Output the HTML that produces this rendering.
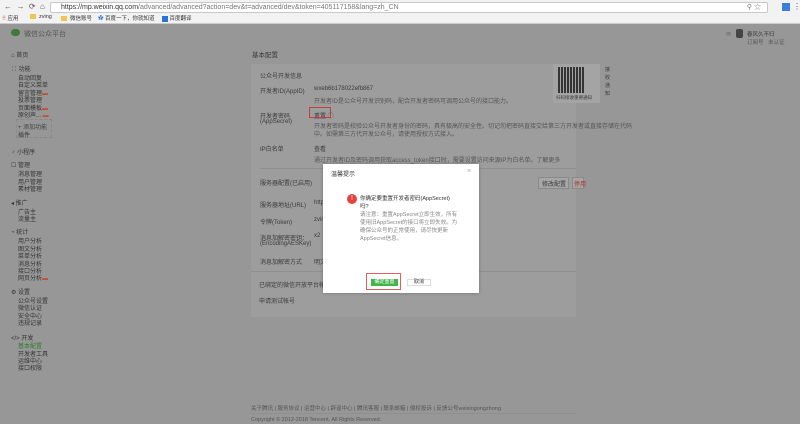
<!DOCTYPE html>
<html><head><meta charset="utf-8"><style>
*{margin:0;padding:0;box-sizing:border-box}
body{width:800px;height:424px;overflow:hidden;position:relative;background:#979797;font-family:"Liberation Sans","Noto Sans CJK SC",sans-serif;font-size:6px;color:#3a3a3a}
.a{position:absolute;white-space:nowrap}
.chrome{position:absolute;left:0;top:0;width:800px;height:24px;background:#f2f2f2;border-bottom:1px solid #ccc}
.url{position:absolute;left:50px;top:2px;width:718px;height:11px;background:#fff;border:1px solid #c8c8c8;border-radius:2px;font-size:7px;color:#777;padding-left:10px;line-height:9px}
.bm{position:absolute;top:14px;font-size:5.5px;color:#333}
.fold{display:inline-block;width:6px;height:5px;background:#f1c550;margin-right:3px;vertical-align:middle}
.sb{color:#333;font-size:6px}
.panel{position:absolute;left:251px;top:64px;width:325px;height:253px;background:#9d9d9d}
.dlg{position:absolute;left:323px;top:164px;width:156px;height:129px;background:#fff;box-shadow:0 0 3px rgba(0,0,0,.3)}
.g{color:#555}
</style></head><body>
<div class="chrome">
<div class="a" style="left:4px;top:2px;font-size:8px;color:#555">←&nbsp; → &nbsp;⟳ &nbsp;⌂</div>
<div class="url"><span style="color:#333">https://mp.weixin.qq.com</span>/advanced/advanced?action=dev&amp;t=advanced/dev&amp;token=405117158&amp;lang=zh_CN<span style="position:absolute;right:6px;top:0">⚲ ☆</span></div>
<div class="a" style="left:782px;top:3px;width:8px;height:8px;background:#3b7ed8"></div>
<div class="a" style="left:793px;top:2px;font-size:8px;color:#555">⋮</div>
<div class="bm" style="left:2px"><span style="color:#d44">⠿</span> 应用</div>
<div class="bm" style="left:30px"><span class="fold"></span>zving</div>
<div class="bm" style="left:61px"><span class="fold"></span>微信账号</div>
<div class="bm" style="left:98px"><span style="color:#3a7bd5">✿</span> 百度一下，你就知道</div>
<div class="bm" style="left:162px"><span style="display:inline-block;width:6px;height:6px;background:#2a74d6;vertical-align:middle"></span> 百度翻译</div>
</div>
<div class="a" style="left:11px;top:29px;width:9px;height:7px;background:#3f7a3a;border-radius:4px"></div>
<div class="a" style="left:24px;top:29px;font-size:7px;color:#555">微信公众平台</div>
<div class="a" style="left:736px;top:29px;width:7px;height:9px;background:#444;border-radius:2px"></div>
<div class="a" style="left:747px;top:30px;font-size:5.5px">春风久不归</div>
<div class="a" style="left:747px;top:38px;font-size:5.5px;color:#555">订阅号 &nbsp; 未认证</div>
<div class="a" style="left:726px;top:31px;font-size:6px;color:#666">✉</div>

<div class="sb">
<div class="a" style="left:11px;top:50px">⌂ 首页</div>
<div class="a" style="left:11px;top:64px">∷ 功能</div>
<div class="a" style="left:18px;top:73px">自动回复</div>
<div class="a" style="left:18px;top:80px">自定义菜单</div>
<div class="a" style="left:18px;top:88px">留言管理<span style="color:#c5502f">▬</span></div>
<div class="a" style="left:18px;top:95px">投票管理</div>
<div class="a" style="left:18px;top:103px">页面模板<span style="color:#c5502f">▬</span></div>
<div class="a" style="left:18px;top:110px">原创声... <span style="color:#c5502f">▬</span></div>
<div class="a" style="left:16px;top:119px;width:36px;height:19px;border:1px dashed #888"></div>
<div class="a" style="left:18px;top:122px;color:#444">+ 添加功能</div>
<div class="a" style="left:18px;top:130px">插件</div>
<div class="a" style="left:11px;top:147px">♂ 小程序</div>
<div class="a" style="left:11px;top:160px">☐ 管理</div>
<div class="a" style="left:18px;top:169px">消息管理</div>
<div class="a" style="left:18px;top:177px">用户管理</div>
<div class="a" style="left:18px;top:184px">素材管理</div>
<div class="a" style="left:11px;top:198px">◂ 推广</div>
<div class="a" style="left:18px;top:207px">广告主</div>
<div class="a" style="left:18px;top:214px">流量主</div>
<div class="a" style="left:11px;top:227px">◔ 统计</div>
<div class="a" style="left:18px;top:236px">用户分析</div>
<div class="a" style="left:18px;top:244px">图文分析</div>
<div class="a" style="left:18px;top:251px">菜单分析</div>
<div class="a" style="left:18px;top:259px">消息分析</div>
<div class="a" style="left:18px;top:266px">接口分析</div>
<div class="a" style="left:18px;top:273px">网页分析<span style="color:#c5502f">▬</span></div>
<div class="a" style="left:11px;top:287px">⚙ 设置</div>
<div class="a" style="left:18px;top:296px">公众号设置</div>
<div class="a" style="left:18px;top:303px">微信认证</div>
<div class="a" style="left:18px;top:311px">安全中心</div>
<div class="a" style="left:18px;top:318px">违规记录</div>
<div class="a" style="left:11px;top:333px">&lt;/&gt; 开发</div>
<div class="a" style="left:18px;top:341px;color:#2e7d2e">基本配置</div>
<div class="a" style="left:18px;top:349px">开发者工具</div>
<div class="a" style="left:18px;top:356px">运维中心</div>
<div class="a" style="left:18px;top:363px">接口权限</div>
</div>

<div class="a" style="left:252px;top:49px;font-size:6.5px">基本配置</div>
<div class="panel"></div>
<div class="a" style="left:260px;top:71px">公众号开发信息</div>
<div class="a" style="left:260px;top:86px">开发者ID(AppID)</div>
<div class="a" style="left:314px;top:86px">wxeb6b178022efb867</div>
<div class="a g" style="left:314px;top:96px">开发者ID是公众号开发识别码，配合开发者密码可调用公众号的接口能力。</div>
<div class="a" style="left:260px;top:111px">开发者密码</div>
<div class="a" style="left:260px;top:119px">(AppSecret)</div>
<div class="a" style="left:314px;top:111px">重置 ⓘ</div>
<div class="a" style="left:309px;top:107px;width:22px;height:11px;border:1px solid #c0403f"></div>
<div class="a g" style="left:314px;top:121px">开发者密码是校验公众号开发者身份的密码，具有极高的安全性。切记勿把密码直接交给第三方开发者或直接存储在代码</div>
<div class="a g" style="left:314px;top:129px">中。如需第三方代开发公众号，请使用授权方式接入。</div>
<div class="a" style="left:260px;top:144px">IP白名单</div>
<div class="a" style="left:314px;top:144px">查看</div>
<div class="a g" style="left:314px;top:155px">通过开发者ID及密码调用获取access_token接口时，需要设置访问来源IP为白名单。了解更多</div>
<div class="a" style="left:260px;top:168px;width:316px;height:1px;background:#8f8f8f"></div>
<div class="a" style="left:260px;top:178px">服务器配置(已启用)</div>
<div class="a" style="left:538px;top:177px;width:31px;height:12px;background:#a6a6a6;border:1px solid #8a8a8a"></div>
<div class="a" style="left:542px;top:179px">修改配置</div>
<div class="a" style="left:572px;top:177px;width:12px;height:12px;background:#a6a6a6;border:1px solid #8a8a8a;color:#a33;padding:1px">停用</div>
<div class="a" style="left:260px;top:200px">服务器地址(URL)</div>
<div class="a" style="left:314px;top:200px">http</div>
<div class="a" style="left:260px;top:217px">令牌(Token)</div>
<div class="a" style="left:314px;top:217px">zvin</div>
<div class="a" style="left:260px;top:233px">消息加解密密钥：</div>
<div class="a" style="left:260px;top:241px">(EncodingAESKey)</div>
<div class="a" style="left:314px;top:233px">x2</div>
<div class="a" style="left:260px;top:257px">消息加解密方式</div>
<div class="a" style="left:314px;top:257px">明文</div>
<div class="a" style="left:251px;top:271px;width:325px;height:1px;background:#8f8f8f"></div>
<div class="a" style="left:259px;top:280px">已绑定的微信开放平台帐号</div>
<div class="a" style="left:259px;top:296px">申请测试帐号</div>
<div class="a" style="left:553px;top:64px;width:47px;height:39px;background:#a4a4a4"></div>
<div class="a" style="left:558px;top:67px;width:26px;height:26px;background:repeating-linear-gradient(90deg,#222 0 2px,#a4a4a4 2px 3px),#222;opacity:.85"></div>
<div class="a" style="left:556px;top:95px;font-size:4.5px">扫码接收重要通知</div>
<div class="a" style="left:605px;top:66px;width:6px;font-size:5px;white-space:normal;line-height:8px">接收通知</div>

<div class="a g" style="left:251px;top:404px;font-size:5.5px">关于腾讯 | 服务协议 | 运营中心 | 辟谣中心 | 腾讯客服 | 联系邮箱 | 侵权投诉 | 反馈公号weixingongzhong</div>
<div class="a" style="left:251px;top:413px;width:325px;height:1px;background:#8f8f8f"></div>
<div class="a g" style="left:251px;top:417px;font-size:5.5px">Copyright © 2012-2018 Tencent. All Rights Reserved.</div>

<div class="dlg">
<div class="a" style="left:8px;top:5px;font-size:6px;color:#333">温馨提示</div>
<div class="a" style="left:144px;top:4px;font-size:7px;color:#aaa">×</div>
<div class="a" style="left:24px;top:30px;width:10px;height:10px;border-radius:5px;background:#e64340;color:#fff;font-size:7px;text-align:center;line-height:10px">!</div>
<div class="a" style="left:37px;top:31px;font-size:5.5px;color:#333;line-height:8px">你确定要重置开发者密码(AppSecret)<br>吗?</div>
<div class="a" style="left:37px;top:47px;font-size:5.5px;color:#888;line-height:8px">请注意：重置AppSecret立即生效，所有<br>使用旧AppSecret的接口将立即失效。为<br>确保公众号的正常使用，请尽快更新<br>AppSecret信息。</div>
<div class="a" style="left:48px;top:115px;width:27px;height:7px;background:#44b549;color:#fff;font-size:5px;text-align:center;line-height:7px">确定重置</div>
<div class="a" style="left:84px;top:115px;width:24px;height:7px;border:1px solid #ddd;color:#333;font-size:5px;text-align:center;line-height:5px">取消</div>
<div class="a" style="left:43px;top:109px;width:35px;height:17px;border:1px solid #e06060"></div>
</div>
</body></html>
